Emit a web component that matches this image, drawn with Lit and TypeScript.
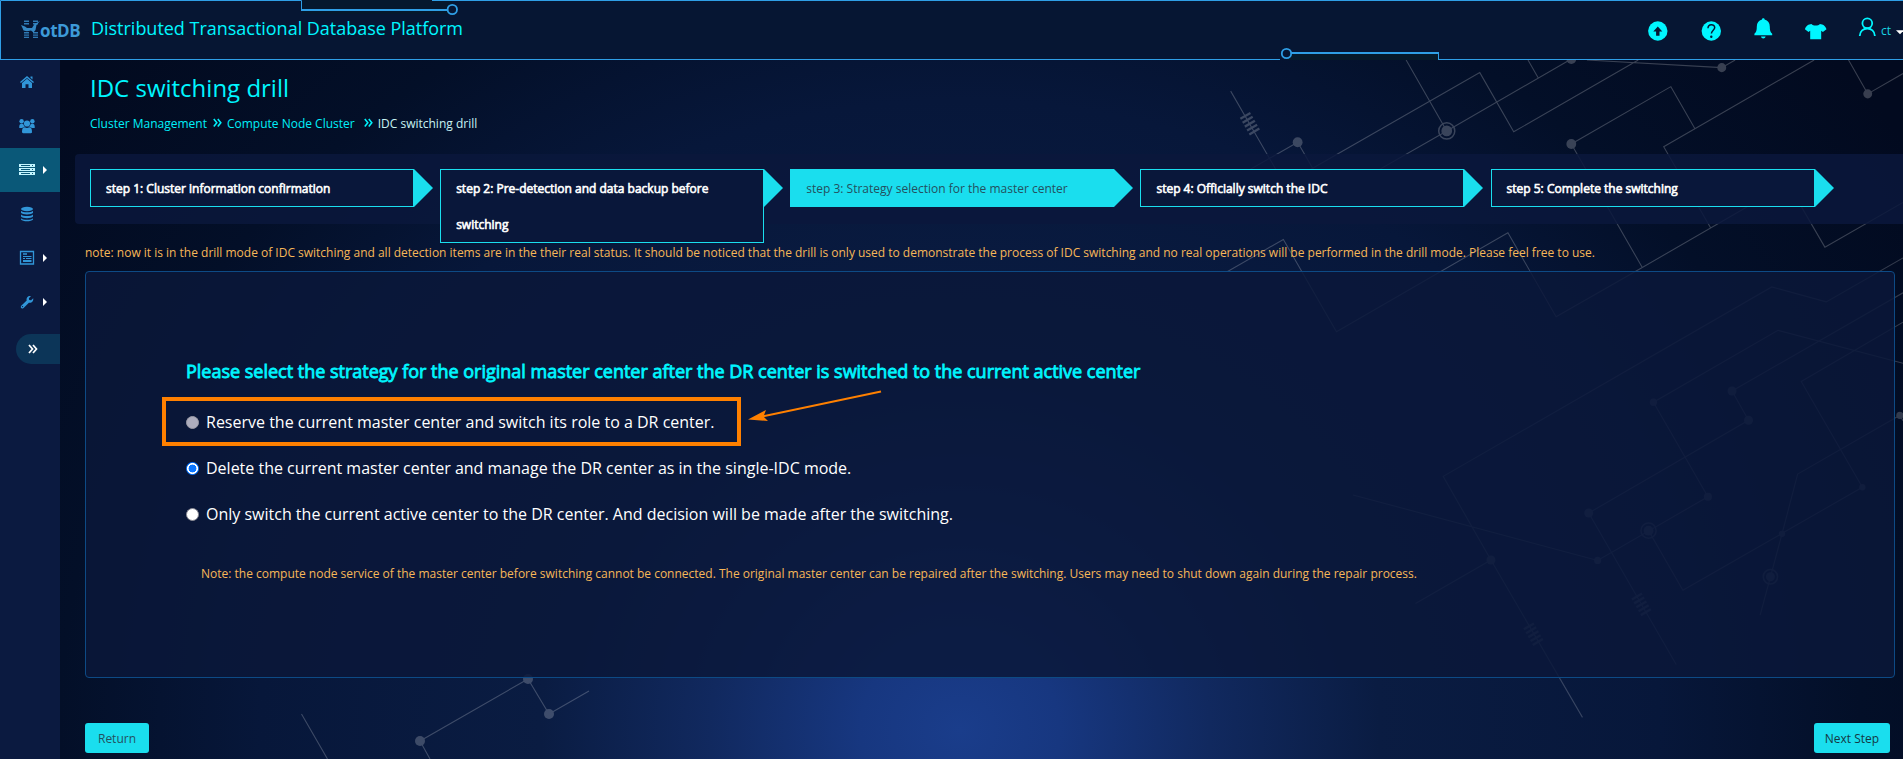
import { LitElement, html, svg, css } from "lit";
import { customElement, state } from "lit/decorators.js";
import { classMap } from "lit/directives/class-map.js";

const ticks = (x: number, y: number) => svg`
  <g transform="translate(${x} ${y}) rotate(60)">
    ${[-20, -10, 0, 10, 20].map((d) => svg`<rect x=${d - 2.6} y="-13" width="5.2" height="26" stroke="none" fill="#fff"/>`)}
  </g>`;
const dot = (x: number, y: number, r = 10) => svg`<circle cx=${x} cy=${y} r=${r} fill="#fff" stroke="none"/>`;
const ring = (x: number, y: number, r = 18) => svg`<circle cx=${x} cy=${y} r=${r - 6} fill="#fff" stroke="none"/><circle cx=${x} cy=${y} r=${r} stroke-width="3.4"/>`;

@customElement("circuit-backdrop")
class CircuitBackdrop extends LitElement {
  static styles = css`
    :host { display: block; }
    svg { display: block; }
    .traces { fill: none; stroke: #fff; stroke-width: 2.4; }
    .traces.thin { stroke-width: 1.1; }
    .bright { opacity: 0.21; }
    .soft { opacity: 0.19; }
  `;
  render() {
    return html`<svg width="1903" height="759" viewBox="0 0 1903 759">
      <g class="traces bright" transform="translate(1203 50) scale(0.44643 0.45216)">
        <path d="M62 91L183 298M212 204L40 301M212 204L284 327M183 297L620 50L696 181L975 22M455 22L546 179L825 20M546 179L284 327M728 22L751 62M860 22L1162 39L1192 22M1102 174L1048 81L825 208L984 481L1310 295L1393 436L1568 337M1369 22L1032 214L1137 393M1446 22L1489 97L1568 52M55 490L180 419L299 623L683 404L791 590L984 481"/>
        ${ticks(105, 163)}${dot(212, 204, 11)}${dot(183, 297)}${dot(284, 327, 11)}${dot(825, 20, 11)}${dot(1162, 39)}${dot(825, 208, 11)}${dot(1489, 97)}${ring(546, 179)}
      </g>
      <g class="traces soft" transform="translate(1203 50) scale(0.44643 0.45216)">
        <path d="M1568 460L1396 557L1274 524L538 943L645 1128L850 1476M645 1128L476 1224M1568 693L1288 620L1009 779L1131 988L884 1129L336 984M998 1063L1075 1195L1477 967L1340 733L1568 602M1568 537L1185 754L1222 819L864 1024L1060 1359M1568 820L1561 808L1332 938L1297 1070L1248 1250"/>
        ${ticks(740, 1292)}${ticks(982, 1226)}
        ${dot(645, 1128)}${dot(1009, 779, 8)}${dot(1131, 988, 9)}${dot(884, 1129, 8)}${dot(1297, 1070, 7)}${dot(1477, 967, 7)}${dot(1185, 754)}${dot(1222, 819)}${dot(864, 1024)}${dot(1561, 808, 8)}
        ${ring(998, 1063, 17)}${ring(1271, 1165, 16)}
      </g>
      <g class="traces thin bright">
        <path d="M301.5 714L327.500 759M430 759L420 741L528 679L549 714L589 691"/>
        ${dot(420, 741, 5)}${dot(528, 679, 5)}${dot(549, 714, 5)}
      </g>
    </svg>`;
  }
}

@customElement("platform-header")
class PlatformHeader extends LitElement {
  static styles = css`
    :host { display: block; height: 60px; position: relative; background: #061633; color: #00f6ff; }
    .frame { position: absolute; left: 0; top: 0; }
    .bar { position: relative; display: flex; align-items: center; height: 60px; }
    .logo { display: flex; width: 70px; margin-left: 21px; height: 22px; color: #3d9ad8; }
    .logo svg { flex: none; }
    .logo span { font: 700 17px/23px "Open Sans", sans-serif; letter-spacing: -0.4px; margin-left: -3px; }
    .name { font-size: 18px; line-height: 26px; flex: 1; margin-bottom: 5px; letter-spacing: -0.02px; }
    .tools { display: flex; height: 60px; flex: none; }
    .tools svg { display: block; }
  `;
  render() {
    return html`
      <svg class="frame" width="1903" height="60" fill="none" stroke="#2f9fe6">
        <rect x="302" y="0" width="150" height="14" fill="#061a2b" stroke="none" opacity=".7"/>
        <rect x="1287" y="54" width="151" height="6" fill="#061a2b" stroke="none"/>
        <path d="M.5 59V.5H301.500V9.500M432 .5H1903M0 59.500H1280M1438 59.500H1903M1438.500 52V60"/>
        <path stroke-width="2" d="M301 10H447M1291 53H1439"/>
        <circle cx="452.300" cy="9.500" r="4.700" stroke-width="1.800" fill="#061633"/>
        <circle cx="1286.500" cy="53.500" r="4.700" stroke-width="1.800" fill="#061633"/>
      </svg>
      <div class="bar">
        <div class="logo">
          <svg width="22" height="20" viewBox="0 0 22 20">
            <g fill="#2f7ab5"><rect x="3" y="1.500" width="5" height="1.500"/><rect x="3" y="4" width="5" height="1.500"/><rect x="3" y="13" width="5" height="1.500"/><rect x="3" y="15.500" width="5" height="1.200"/><rect x="3" y="17.700" width="5" height="1.300"/><rect x="12" y="1.500" width="5" height="1.500"/><rect x="12" y="4" width="5" height="1.500"/><rect x="12" y="13" width="5" height="1.500"/><rect x="12" y="15.500" width="5" height="1.200"/><rect x="12" y="17.700" width="5" height="1.300"/></g>
            <path d="M0 6l4 1.500 2 1.500h5l2.500-4 5.500-3-3.500 4-1 5-2 2.500-2.500-2-4 .8-3.500-.8-1-2.500z" fill="#3488c4"/>
          </svg>
          <span>otDB</span>
        </div>
        <div class="name">Distributed Transactional Database Platform</div>
        <div class="tools">
          <svg width="263" height="60" viewBox="1640 0 263 60">
            <circle cx="1657.800" cy="31" r="9.700" fill="#00f6ff"/>
            <path d="M1657.800 26.500l4.500 5h-2.800v4.200h-3.400v-4.200h-2.800z" fill="#061633"/>
            <circle cx="1711.300" cy="31" r="9.700" fill="#00f6ff"/>
            <path d="M1708 28.300c0-4.700 6.700-4.500 6.700-.7 0 2.600-3.200 2.700-3.300 6" fill="none" stroke="#061633" stroke-width="1.500"/>
            <circle cx="1711.300" cy="36.700" r="1.200" fill="#061633"/>
            <path d="M1763.300 18.200c.8 0 1.300.5 1.300 1.400 3.300.8 5.200 3.400 5.200 6.900 0 4 .5 5.800 2.400 7.200v1.500h-17.800v-1.500c1.900-1.400 2.400-3.200 2.400-7.200 0-3.500 1.900-6.100 5.200-6.900 0-.9.500-1.400 1.300-1.400zM1761 36.500h4.600c-.3 2.600-4.300 2.600-4.600 0z" fill="#00f6ff"/>
            <path d="M1811.500 24c1.600 2 6.800 2 8.400 0 3.200.4 5 1.200 6.600 5.200l-3.600 2.700-1.700-1.200v8.600h-11v-8.600l-1.700 1.200-3.600-2.700c1.600-4 3.400-4.800 6.600-5.200z" fill="#00f6ff"/>
            <g fill="none" stroke="#00f6ff" stroke-width="1.800"><circle cx="1867.300" cy="23.300" r="4.900"/><path d="M1859.700 36c.2-10 15-10 15.200 0"/></g>
            <text x="1881" y="35" fill="#19d4e4" font-family="Open Sans" font-size="12">ct</text>
            <path d="M1896 30.300h8l-4 4z" fill="#fff"/>
          </svg>
        </div>
      </div>`;
  }
}

const navIcons = [
  svg`<path d="M8 2l7 6-.9 1L8 3.900 1.900 9 1 8zM11.500 2.500h2v3l-2-1.700zM3 9l5-4.200L13 9v5H9.500v-3.700h-3V14H3z"/>`,
  svg`<circle cx="8" cy="5.500" r="3.100"/><circle cx="2.600" cy="3.300" r="2.200"/><circle cx="13.400" cy="3.300" r="2.200"/><path d="M0.200 9.500C.2 6.800 1 5.800 2.600 5.800c1 0 1.500.3 2 .8.100 1.300.7 2 1.400 2.500-1.300.1-2 .4-2.700.9H1c-.5 0-.8-.1-.8-.5zM15.800 9.500c0-2.700-.8-3.700-2.400-3.700-1 0-1.500.3-2 .8-.1 1.300-.7 2-1.400 2.500 1.300.1 2 .4 2.700.9H15c.5 0 .8-.1.800-.5zM3 14c0-3.600 1-4.800 2.900-4.800 1.200.9 3 .9 4.200 0 1.900 0 2.900 1.200 2.900 4.800 0 .8-.5 1.200-1.200 1.200H4.200C3.500 15.200 3 14.800 3 14z"/>`,
  svg`<path d="M0 2h16v3H0zM0 6h16v3H0zM0 10h16v3H0z"/><path d="M2 3.500h9M2 7.500h9M2 11.500h9M13 3.500h1M13 7.500h1M13 11.500h1" stroke="#0a5878" stroke-width="1"/>`,
  svg`<ellipse cx="8" cy="3" rx="6" ry="2.200"/><path d="M2 4.800c1.500 2 10.500 2 12 0v2c-1.500 2.200-10.500 2.200-12 0zM2 8.500c1.500 2 10.500 2 12 0v2c-1.500 2.200-10.500 2.200-12 0zM2 12.200c1.500 2 10.500 2 12 0v1.300c-1.500 2.400-10.500 2.400-12 0z"/>`,
  svg`<path d="M1.500 1.500h13v12.500h-13z" fill="none" stroke="#3196d8" stroke-width="1.300"/><path d="M4 3.200h4v1.500H4zM4 6h8.500v1H4zM4 8h2v1H4zM7 8h5.500v1H7zM4 10h8.500v2H4z"/>`,
  svg`<path d="M14.200 4.200c.5 2.500-1.300 5-4.300 4.500L4.600 13.900c-1.700 1.600-3.800-.4-2.400-2.100L7.700 6.500C7 3.500 9.300 1.400 12 2L9.900 4.300l.3 1.800 1.900.2z"/><circle cx="3.500" cy="12.600" r=".7" fill="#0b1a40"/>`,
];

@customElement("side-nav")
class SideNav extends LitElement {
  static styles = css`
    :host { display: block; width: 60px; background: #0b1a40; }
    .item { display: flex; align-items: center; height: 44px; padding-left: 19px; }
    .item svg { fill: #3196d8; }
    .item.active { background: #0a5878; }
    .item.active svg { fill: #c4f6ff; }
    .more { width: 0; height: 0; margin-left: 8px; border: 4px solid transparent; border-left-color: #fff; border-right: 0; }
    .expand { display: flex; align-items: center; height: 30px; margin: 10px 0 0 16px; padding-left: 12px; border-radius: 15px 0 0 15px; background: #0c3558; }
  `;
  render() {
    return html`
      ${navIcons.map((icon, i) => html`
        <div class=${classMap({ item: true, active: i === 2 })}>
          <svg width="16" height="16" viewBox="0 0 16 16">${icon}</svg>
          ${[2, 4, 5].includes(i) ? html`<i class="more"></i>` : null}
        </div>`)}
      <div class="expand"><svg width="10" height="10" viewBox="0 0 10 10" fill="none" stroke="#fff" stroke-width="1.700"><path d="M1 1l3.500 4L1 9M5 1l3.500 4L5 9"/></svg></div>`;
  }
}

@customElement("app-root")
class AppRoot extends LitElement {
  @state() private selected = 1;

  static styles = css`
    :host { display: block; height: 759px; overflow: hidden; position: relative; font-family: "Open Sans", sans-serif;
      background: radial-gradient(ellipse 1000px 900px at 960px 730px, #1a3d8b 0, #173780 10%, #11295f 25%, #0a1c42 42%, #07173a 70%, #030f28 90%, #020a1f 115%); }
    circuit-backdrop { position: absolute; left: 0; top: 0; }
    platform-header { position: relative; }
    .body { position: relative; display: flex; height: 699px; }
    side-nav { flex: none; }
    main { flex: 1; min-width: 0; display: flex; flex-direction: column; }
    h1 { margin: 10px 0 0 30px; font-size: 24px; font-weight: 400; line-height: 36px; color: #00f6ff; }
    .crumbs { display: flex; align-items: center; margin: 8px 0 0 30px; height: 18px; font-size: 12px; color: #00f0fa; white-space: nowrap; }
    .crumbs svg { margin: 0 5px 0 6px; }
    .crumbs .last { margin-left: 3px; }
    .crumbs .here { color: #c8f3f3; }
    .steps { display: flex; box-sizing: border-box; height: 70px; margin: 22px 0 0 15px; padding: 15px 0 0 15px; background: rgba(10, 23, 60, 0.85); border-radius: 4px 0 0 4px; }
    .step { display: flex; width: 350.150px; flex: none; align-items: flex-start; }
    .box { box-sizing: border-box; width: 324px; min-height: 38px; flex: none; padding: 1px 15px 0; border: 1px solid #1adeee; background: #09173a; font-size: 12px; line-height: 36px; color: #fff; -webkit-text-stroke: 0.6px #fff; }
    .box span { display: block; margin-bottom: -1px; }
    .tip { width: 0; border: 19px solid transparent; border-left-color: #1adeee; border-right: 0; }
    .step.now .box { background: #1adeee; color: #24505e; -webkit-text-stroke: 0; }
    .note { margin: 19px 0 0 25px; font-size: 12px; line-height: 20px; letter-spacing: -0.004px; color: #f7b758; white-space: nowrap; }
    .panel { box-sizing: border-box; height: 407px; margin: 8px 8px 0 25px; padding: 86px 0 0 100px; border: 1px solid #0d4a85; border-radius: 4px; background: rgba(10, 23, 58, 0.85); white-space: nowrap; }
    h2 { margin: 0; font-size: 18px; font-weight: 400; line-height: 26px; letter-spacing: -0.01px; color: #00f6ff; -webkit-text-stroke: 0.8px #00f6ff; }
    .option { display: flex; align-items: center; width: 540px; height: 46px; font-size: 16px; color: #fff; }
    .first { margin-top: 15px; position: relative; }
    .mark { position: absolute; left: -24px; top: -8px; }
    .radio { box-sizing: border-box; width: 13px; height: 13px; margin-right: 7px; flex: none; border-radius: 50%; background: #fff; border: 1px solid #8b8b95; }
    .radio.off { background: #adadbd; border-color: #9a9aa6; }
    .radio.on { border: 0; background: radial-gradient(circle, #0a75ff 0 3.700px, #fff 4.200px 5.200px, #0a75ff 5.700px); }
    .warn { margin: 27px 0 0 15px; font-size: 12px; line-height: 20px; letter-spacing: -0.004px; color: #f7b758; }
    .actions { display: flex; justify-content: space-between; margin: 45px 13px 0 25px; }
    .btn { box-sizing: border-box; height: 30px; border: 0; border-radius: 3px; background: #1adeee; color: #24505e; font: 12px "Open Sans", sans-serif; padding: 0; width: 64px; }
    .btn.next { width: 76px; color: #143844; }
  `;

  render() {
    const chevrons = html`<svg width="9" height="10" viewBox="0 0 9 10" fill="none" stroke="#00f0fa" stroke-width="1.600"><path d="M.8 1l3 3.700-3 3.700M4.800 1l3 3.700-3 3.700"/></svg>`;
    const steps = [
      "step 1: Cluster information confirmation",
      "step 2: Pre-detection and data backup before switching",
      "step 3: Strategy selection for the master center",
      "step 4: Officially switch the IDC",
      "step 5: Complete the switching",
    ];
    const options = [
      "Reserve the current master center and switch its role to a DR center.",
      "Delete the current master center and manage the DR center as in the single-IDC mode.",
      "Only switch the current active center to the DR center. And decision will be made after the switching.",
    ];
    return html`
      <circuit-backdrop></circuit-backdrop>
      <platform-header></platform-header>
      <div class="body">
        <side-nav></side-nav>
        <main>
          <h1>IDC switching drill</h1>
          <div class="crumbs"><span>Cluster Management</span>${chevrons}<span>Compute Node Cluster</span><span class="last"></span>${chevrons}<span class="here">IDC switching drill</span></div>
          <div class="steps">${steps.map((s, i) => html`<div class=${classMap({ step: true, now: i === 2 })}><div class="box"><span>${s}</span></div><i class="tip"></i></div>`)}</div>
          <div class="note">note: now it is in the drill mode of IDC switching and all detection items are in the their real status. It should be noticed that the drill is only used to demonstrate the process of IDC switching and no real operations will be performed in the drill mode. Please feel free to use.</div>
          <section class="panel">
            <h2>Please select the strategy for the original master center after the DR center is switched to the current active center</h2>
            ${options.map((o, i) => html`
              <div class=${classMap({ option: true, first: i === 0 })} @click=${() => { if (i) this.selected = i; }}>
                <i class=${classMap({ radio: true, off: i === 0, on: i === this.selected })}></i><span>${o}</span>
                ${i === 0 ? html`<svg class="mark" width="722" height="60" viewBox="162 391 722 60" overflow="visible">
                  <rect x="164" y="399" width="575" height="45" fill="none" stroke="#ff8000" stroke-width="4"/>
                  <path d="M881 391.500L762 416.500" stroke="#ff8000" stroke-width="2"/>
                  <path d="M748 419.500L766 410L763.500 416.500L768 421z" fill="#ff8000"/>
                </svg>` : null}
              </div>`)}
            <div class="warn">Note: the compute node service of the master center before switching cannot be connected. The original master center can be repaired after the switching. Users may need to shut down again during the repair process.</div>
          </section>
          <div class="actions"><button class="btn">Return</button><button class="btn next">Next Step</button></div>
        </main>
      </div>`;
  }
}
